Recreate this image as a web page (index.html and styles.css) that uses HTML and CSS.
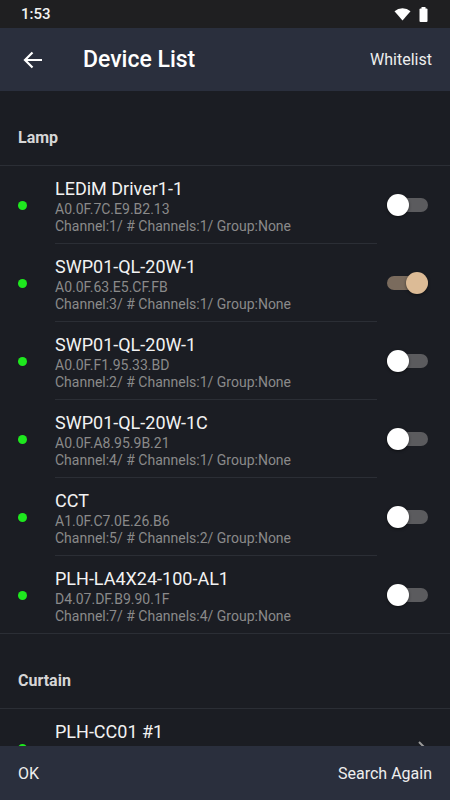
FILE: index.html
```html
<!DOCTYPE html>
<html lang="en">
<head>
  <meta charset="UTF-8">
  <meta name="viewport" content="width=device-width, initial-scale=1.0">
  <title>Device List</title>
  <link rel="stylesheet" href="styles.css">
</head>
<body>
  <div class="app">
    <!-- status bar -->
    <div class="status">
      <span class="time">1:53</span>
      <span class="status-icons">
        <svg width="17" height="14" viewBox="0 0 17 14"><path d="M0.5 4.2 A12 12 0 0 1 16.5 4.2 L8.5 13.5 Z" fill="#fff"/></svg>
        <svg width="9" height="15" viewBox="0 0 9 15"><rect x="2.5" y="0" width="4" height="2" fill="#fff"/><rect x="0.5" y="1.5" width="8" height="13.5" rx="1" fill="#fff"/></svg>
      </span>
    </div>

    <!-- toolbar -->
    <div class="toolbar">
      <svg class="back" width="20" height="18" viewBox="0 0 20 18"><path d="M19 9 H2 M9.5 1.5 L2 9 L9.5 16.5" stroke="#fff" stroke-width="2.2" fill="none"/></svg>
      <h1 class="title">Device List</h1>
      <span class="action">Whitelist</span>
    </div>

    <div class="content">
      <div class="section-title">Lamp</div>

      <div class="row">
        <span class="dot"></span>
        <div class="info">
          <div class="name">LEDiM Driver1-1</div>
          <div class="sub">A0.0F.7C.E9.B2.13</div>
          <div class="sub">Channel:1/ # Channels:1/ Group:None</div>
        </div>
        <span class="switch"><span class="knob"></span></span>
      </div>

      <div class="row">
        <span class="dot"></span>
        <div class="info">
          <div class="name">SWP01-QL-20W-1</div>
          <div class="sub">A0.0F.63.E5.CF.FB</div>
          <div class="sub">Channel:3/ # Channels:1/ Group:None</div>
        </div>
        <span class="switch on"><span class="knob"></span></span>
      </div>

      <div class="row">
        <span class="dot"></span>
        <div class="info">
          <div class="name">SWP01-QL-20W-1</div>
          <div class="sub">A0.0F.F1.95.33.BD</div>
          <div class="sub">Channel:2/ # Channels:1/ Group:None</div>
        </div>
        <span class="switch"><span class="knob"></span></span>
      </div>

      <div class="row">
        <span class="dot"></span>
        <div class="info">
          <div class="name">SWP01-QL-20W-1C</div>
          <div class="sub">A0.0F.A8.95.9B.21</div>
          <div class="sub">Channel:4/ # Channels:1/ Group:None</div>
        </div>
        <span class="switch"><span class="knob"></span></span>
      </div>

      <div class="row">
        <span class="dot"></span>
        <div class="info">
          <div class="name">CCT</div>
          <div class="sub">A1.0F.C7.0E.26.B6</div>
          <div class="sub">Channel:5/ # Channels:2/ Group:None</div>
        </div>
        <span class="switch"><span class="knob"></span></span>
      </div>

      <div class="row last">
        <span class="dot"></span>
        <div class="info">
          <div class="name">PLH-LA4X24-100-AL1</div>
          <div class="sub">D4.07.DF.B9.90.1F</div>
          <div class="sub">Channel:7/ # Channels:4/ Group:None</div>
        </div>
        <span class="switch"><span class="knob"></span></span>
      </div>

      <div class="section-title">Curtain</div>

      <div class="row">
        <span class="dot"></span>
        <div class="info">
          <div class="name">PLH-CC01 #1</div>
        </div>
        <svg class="chevron" width="8" height="14" viewBox="0 0 8 14"><path d="M1 1 L7 7 L1 13" stroke="#9a9a9a" stroke-width="2" fill="none"/></svg>
      </div>
    </div>

    <!-- bottom actions -->
    <div class="bottom">
      <span>OK</span>
      <span>Search Again</span>
    </div>
  </div>
</body>
</html>
```

FILE: styles.css
```css
html, body {
  margin: 0;
  padding: 0;
}
body {
  font-family: Roboto, "Noto Sans", sans-serif;
  background-color: #1b1d23;
  color: #f0f0f0;
}
.app {
  width: 450px;
  height: 800px;
  display: flex;
  flex-direction: column;
  overflow: hidden;
}
.status {
  height: 28px;
  flex: none;
  background-color: #1f1f21;
  display: flex;
  align-items: center;
  justify-content: space-between;
  padding: 0 22px 0 21px;
}
.time {
  font-size: 15px;
  font-weight: 500;
  color: #f2f2f2;
}
.status-icons {
  display: flex;
  align-items: center;
  gap: 8px;
}
.toolbar {
  height: 63px;
  flex: none;
  background-color: #2a2f3d;
  display: flex;
  align-items: center;
  padding: 0 18px 0 23px;
}
.back {
  flex: none;
}
.title {
  margin: 0 0 0 40px;
  font-size: 23px;
  font-weight: 500;
  color: #ffffff;
  flex: 1;
}
.action {
  font-size: 16px;
  color: #eeeeee;
}
.content {
  flex: 1;
  overflow: hidden;
}
.section-title {
  height: 75px;
  box-sizing: border-box;
  padding: 37px 18px 0;
  line-height: 20px;
  font-size: 16px;
  font-weight: 700;
  color: #d6d6d6;
  border-bottom: 1px solid #2b2e35;
}
.row {
  height: 78px;
  box-sizing: border-box;
  display: flex;
  align-items: center;
  position: relative;
  padding: 0 22px 0 18px;
}
.row::after {
  content: "";
  position: absolute;
  left: 55px;
  width: 322px;
  bottom: 0;
  border-bottom: 1px solid #2b2e35;
}
.row.last::after {
  left: 0;
  width: 100%;
}
.dot {
  width: 9px;
  height: 9px;
  border-radius: 50%;
  background-color: #1ee81e;
  flex: none;
}
.info {
  flex: 1;
  align-self: stretch;
  margin-left: 28px;
  padding-top: 11px;
}
.name {
  font-size: 18px;
  line-height: 24px;
  color: #f2f2f2;
}
.sub {
  font-size: 14px;
  line-height: 17px;
  color: #8a8a8a;
}
.switch {
  position: relative;
  width: 41px;
  height: 14px;
  border-radius: 7px;
  background-color: #5b5b5e;
  flex: none;
}
.switch .knob {
  position: absolute;
  top: -4px;
  left: 0;
  width: 22px;
  height: 22px;
  border-radius: 50%;
  background-color: #ffffff;
  box-shadow: 0 1px 3px rgba(0, 0, 0, 0.5);
}
.switch.on {
  background-color: #7a6b5d;
}
.switch.on .knob {
  left: 19px;
  background-color: #dcbb96;
}
.chevron {
  flex: none;
  margin-right: 2px;
}
.bottom {
  height: 54px;
  flex: none;
  background-color: #2a2f3d;
  display: flex;
  align-items: center;
  justify-content: space-between;
  padding: 0 18px;
  font-size: 16px;
  color: #eeeeee;
}
```
